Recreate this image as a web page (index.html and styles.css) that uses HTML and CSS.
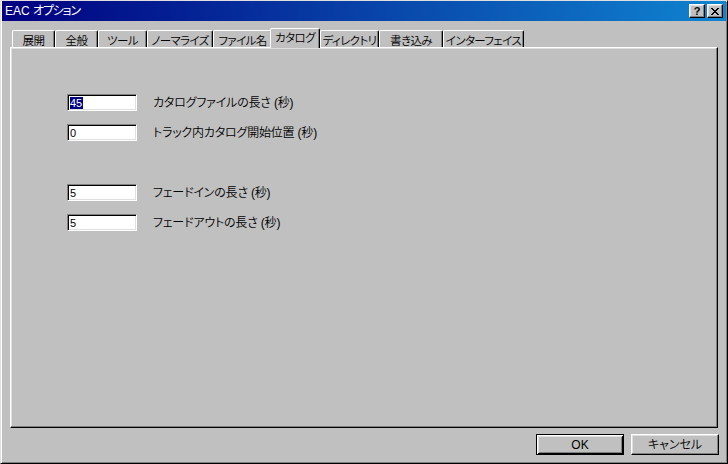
FILE: index.html
```html
<!DOCTYPE html>
<html lang="ja">
<head>
<meta charset="utf-8">
<title>EAC オプション</title>
<link rel="stylesheet" href="styles.css">
</head>
<body>
<div class="window">
  <div class="titlebar">
    <span class="title">EAC <span class="title-jp">オプション</span></span>
    <div class="tbtns">
      <div class="tbtn help">?</div>
      <div class="tbtn close">
        <svg width="8" height="7" viewBox="0 0 8 7" shape-rendering="crispEdges">
          <g fill="#000">
            <rect x="0" y="0" width="2" height="1"/><rect x="6" y="0" width="2" height="1"/>
            <rect x="1" y="1" width="2" height="1"/><rect x="5" y="1" width="2" height="1"/>
            <rect x="2" y="2" width="4" height="1"/>
            <rect x="3" y="3" width="2" height="1"/>
            <rect x="2" y="4" width="4" height="1"/>
            <rect x="1" y="5" width="2" height="1"/><rect x="5" y="5" width="2" height="1"/>
            <rect x="0" y="6" width="2" height="1"/><rect x="6" y="6" width="2" height="1"/>
          </g>
        </svg>
      </div>
    </div>
  </div>

  <div class="tabs">
    <div class="tab w1">展開</div>
    <div class="tab w2">全般</div>
    <div class="tab w3">ツール</div>
    <div class="tab w4">ノーマライズ</div>
    <div class="tab w5">ファイル名</div>
    <div class="tab active">カタログ</div>
    <div class="tab w7">ディレクトリ</div>
    <div class="tab w8">書き込み</div>
    <div class="tab w9">インターフェイス</div>
  </div>

  <div class="panel">
    <div class="group">
      <div class="row">
        <div class="edit"><span class="sel">45</span></div>
        <span class="label">カタログファイルの長さ (秒)</span>
      </div>
      <div class="row">
        <div class="edit">0</div>
        <span class="label">トラック内カタログ開始位置 (秒)</span>
      </div>
    </div>
    <div class="group second">
      <div class="row">
        <div class="edit">5</div>
        <span class="label">フェードインの長さ (秒)</span>
      </div>
      <div class="row">
        <div class="edit">5</div>
        <span class="label">フェードアウトの長さ (秒)</span>
      </div>
    </div>
  </div>

  <div class="footer">
    <div class="btn default">OK</div>
    <div class="btn">キャンセル</div>
  </div>
</div>
</body>
</html>
```

FILE: styles.css
```css
html, body {
  margin: 0;
  padding: 0;
  background: #c0c0c0;
}

body {
  font-family: "Liberation Sans", "Noto Sans CJK JP", sans-serif;
  font-size: 12px;
  font-weight: 350;
  color: #000;
  font-feature-settings: "palt";
}

.window {
  width: 728px;
  height: 464px;
  box-sizing: border-box;
  background: #c0c0c0;
  border: 1px solid;
  border-color: #dfdfdf #000 #000 #dfdfdf;
  box-shadow: inset 1px 1px #fff, inset -1px -1px #808080;
  padding: 0 1px 1px 1px;
}

.titlebar {
  height: 20px;
  display: flex;
  align-items: center;
  justify-content: space-between;
  padding: 0 3px 0 3px;
  background: linear-gradient(to right, #000080, #1084d0);
  color: #fff;
}

.title {
  font-size: 12px;
  line-height: 14px;
  font-weight: 400;
}

.title-jp {
  letter-spacing: -1.2px;
}

.tbtns {
  display: flex;
  gap: 2px;
}

.tbtn {
  width: 16px;
  height: 14px;
  box-sizing: border-box;
  background: #c0c0c0;
  border: 1px solid;
  border-color: #fff #000 #000 #fff;
  box-shadow: inset -1px -1px #808080, inset 1px 1px #dfdfdf;
  display: flex;
  align-items: center;
  justify-content: center;
  color: #000;
}

.help {
  font-family: "Liberation Sans", sans-serif;
  font-weight: bold;
  font-size: 11px;
  line-height: 12px;
}

.close svg {
  display: block;
}

.tabs {
  display: flex;
  align-items: flex-end;
  height: 19px;
  margin: 7px 0 0 10px;
}

.tab {
  height: 17px;
  box-sizing: border-box;
  border-left: 1px solid #fff;
  border-top: 1px solid #fff;
  border-right: 1px solid #000;
  border-top-left-radius: 2px;
  border-top-right-radius: 2px;
  box-shadow: inset -1px 0 #808080;
  display: flex;
  align-items: center;
  justify-content: center;
  padding-top: 2px;
  font-family: "Noto Sans CJK JP", sans-serif;
  font-size: 11.5px;
  line-height: 14px;
  letter-spacing: -0.6px;
  white-space: nowrap;
}

.w1 { width: 43px; }
.w2 { width: 43px; }
.w3 { width: 49px; }
.w4 { width: 66px; }
.w5 { width: 59px; }
.w7 { width: 59px; }
.w8 { width: 64px; }
.w9 { width: 81px; }

.tab.active {
  width: 50px;
  height: 20px;
  margin-left: -2px;
  margin-bottom: -1px;
  padding-top: 0;
  padding-bottom: 3px;
  background: #c0c0c0;
  position: relative;
  z-index: 1;
}

.panel {
  height: 381px;
  box-sizing: border-box;
  margin: 0 8px;
  border: 1px solid;
  border-color: #fff #000 #000 #fff;
  box-shadow: inset -1px -1px #808080, inset 1px 1px #dfdfdf;
  padding: 46px 0 0 56px;
}

.group {
  display: flex;
  flex-direction: column;
  gap: 13px;
}

.group.second {
  margin-top: 43px;
}

.row {
  display: flex;
  align-items: center;
  height: 17px;
}

.edit {
  width: 70px;
  height: 17px;
  box-sizing: border-box;
  background: #fff;
  border: 1px solid;
  border-color: #808080 #fff #fff #808080;
  box-shadow: inset 1px 1px #000, inset -1px -1px #dfdfdf;
  padding-left: 2px;
  display: flex;
  align-items: center;
  font-family: "Liberation Sans", sans-serif;
  font-weight: 400;
  font-size: 11px;
  line-height: 12px;
}

.sel {
  background: #000080;
  color: #fff;
  padding: 0 1px 0 0;
}

.label {
  margin-left: 16px;
  font-size: 12px;
  line-height: 14px;
  letter-spacing: -0.2px;
  white-space: nowrap;
}

.footer {
  display: flex;
  justify-content: flex-end;
  gap: 7px;
  margin: 6px 7px 0 0;
}

.btn {
  width: 88px;
  height: 21px;
  box-sizing: border-box;
  border: 1px solid;
  border-color: #fff #000 #000 #fff;
  box-shadow: inset -1px -1px #808080, inset 1px 1px #dfdfdf;
  display: flex;
  align-items: center;
  justify-content: center;
  font-size: 12px;
  line-height: 14px;
}

.btn.default {
  border-color: #000;
  box-shadow: inset 1px 1px #fff, inset -1px -1px #000, inset 2px 2px #dfdfdf, inset -2px -2px #808080;
}
```
